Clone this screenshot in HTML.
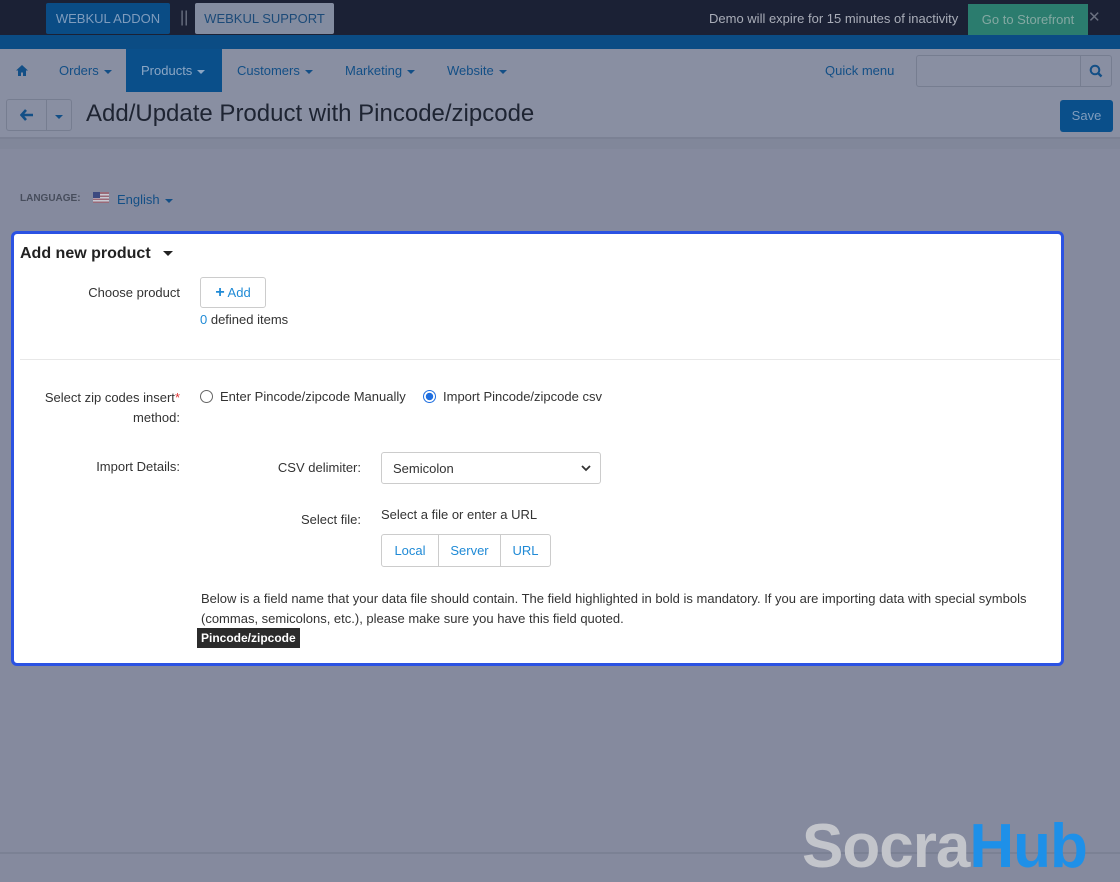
<!DOCTYPE html>
<html><head><style>
*{box-sizing:border-box;margin:0;padding:0}
body{width:1120px;height:880px;overflow:hidden;background:#858a9e;font-family:"Liberation Sans",Arial,sans-serif;font-size:13px;color:#333;position:relative}
.top{position:absolute;left:0;top:0;width:1120px;height:35px;background:#1b2135}
.blue{position:absolute;left:0;top:35px;width:1120px;height:14px;background:#0b4c84}
.btn1{position:absolute;left:46px;top:3px;width:124px;height:31px;background:#0a4c85;color:#7f9cbd;font-size:13px;line-height:31px;text-align:center;border-radius:2px}
.btn2{position:absolute;left:195px;top:3px;width:139px;height:31px;background:#838ca0;color:#1c4a78;font-size:13px;line-height:31px;text-align:center;border-radius:2px}
.nav{position:absolute;left:0;top:49px;width:1120px;height:88px;background:#898fa2}
.navi{position:absolute;top:49px;height:43px;line-height:44px;color:#134f86;font-size:13px}
.caret{display:inline-block;border-left:4px solid transparent;border-right:4px solid transparent;border-top:4px solid currentColor;vertical-align:middle;margin-left:5px}
.sep{position:absolute;left:0;top:137px;width:1120px;height:12px;background:#81879a;border-top:2px solid #7b8194}
.panel{position:absolute;left:11px;top:231px;width:1053px;height:435px;background:#fff;border:3px solid #2b52e3;border-radius:6px}
.lbl{position:absolute;text-align:right;color:#333;font-size:13px}
.lnk{color:#1f8ad6}
</style></head><body>
<div class="top"></div>
<div class="blue"></div>
<div class="btn1">WEBKUL ADDON</div>
<div style="position:absolute;left:180px;top:9px;color:#6e7586;font-size:16px">||</div>
<div class="btn2">WEBKUL SUPPORT</div>
<div style="position:absolute;left:709px;top:11px;color:#a9adb8;font-size:13px">Demo will expire for 15 minutes of inactivity</div>
<div style="position:absolute;left:968px;top:4px;width:120px;height:31px;background:#2b7c6e;color:#84a8a2;font-size:13px;line-height:31px;text-align:center">Go to Storefront</div>
<div style="position:absolute;left:1088px;top:8px;color:#6a7080;font-size:15px">✕</div>
<div class="nav"></div>
<div style="position:absolute;left:126px;top:49px;width:96px;height:43px;background:#0a4f8a"></div>
<svg style="position:absolute;left:15px;top:64px" width="14" height="13" viewBox="0 0 14 13"><path d="M7 1L1 6.5h2V12h3V8.5h2V12h3V6.5h2z" fill="#134f86"/></svg>
<div class="navi" style="left:59px">Orders<span class="caret"></span></div>
<div class="navi" style="left:141px;color:#8ba6c4">Products<span class="caret"></span></div>
<div class="navi" style="left:237px">Customers<span class="caret"></span></div>
<div class="navi" style="left:345px">Marketing<span class="caret"></span></div>
<div class="navi" style="left:447px">Website<span class="caret"></span></div>
<div class="navi" style="left:825px">Quick menu</div>
<div style="position:absolute;left:916px;top:55px;width:196px;height:32px;border:1px solid #767d90;border-radius:3px"></div>
<div style="position:absolute;left:1080px;top:55px;width:1px;height:32px;background:#767d90"></div>
<svg style="position:absolute;left:1089px;top:64px" width="14" height="14" viewBox="0 0 14 14"><circle cx="6" cy="6" r="4.3" stroke="#134f86" stroke-width="2" fill="none"/><path d="M9 9l3.5 3.5" stroke="#134f86" stroke-width="2.4"/></svg>
<div style="position:absolute;left:6px;top:99px;width:66px;height:32px;border:1px solid #767d90;border-radius:3px"></div>
<div style="position:absolute;left:46px;top:99px;width:1px;height:32px;background:#767d90"></div>
<svg style="position:absolute;left:20px;top:109px" width="14" height="12" viewBox="0 0 14 12"><path d="M6 1L1.5 6 6 11M2 6h11" stroke="#134f86" stroke-width="2.6" fill="none"/></svg>
<div style="position:absolute;left:55px;top:108px;color:#134f86"><span class="caret" style="margin:0"></span></div>
<div style="position:absolute;left:86px;top:100px;font-size:24px;color:#1e2432">Add/Update Product with Pincode/zipcode</div>
<div style="position:absolute;left:1060px;top:100px;width:53px;height:32px;background:#0a4f8a;color:#7f9cbd;border-radius:3px;line-height:32px;text-align:center">Save</div>
<div class="sep"></div>
<div style="position:absolute;left:20px;top:193px;font-size:10px;font-weight:bold;color:#474d5c">LANGUAGE:</div>
<svg style="position:absolute;left:93px;top:192px" width="16" height="11"><rect width="16" height="11" fill="#9a6a78"/><rect y="2" width="16" height="1.5" fill="#c8cad3"/><rect y="5" width="16" height="1.5" fill="#c8cad3"/><rect y="8" width="16" height="1.5" fill="#c8cad3"/><rect width="7" height="6" fill="#3d4a80"/></svg>
<div style="position:absolute;left:117px;top:192px;color:#134f86;font-size:13px">English<span class="caret"></span></div>
<div class="panel"></div>
<div style="position:absolute;left:20px;top:245px;font-size:16px;font-weight:bold;color:#222">Add new product <span class="caret" style="margin-left:8px;border-width:5px 5px 0"></span></div>
<div class="lbl" style="left:20px;width:160px;top:285px">Choose product</div>
<div style="position:absolute;left:200px;top:277px;width:66px;height:31px;border:1px solid #ccc;border-radius:3px;color:#1f8ad6;line-height:30px;text-align:center"><b style="font-size:16px">+</b> Add</div>
<div style="position:absolute;left:200px;top:312px"><span class="lnk">0</span> defined items</div>
<div style="position:absolute;left:20px;top:359px;width:1040px;height:1px;background:#e8e8e8"></div>
<div class="lbl" style="left:20px;width:160px;top:388px;line-height:20px">Select zip codes insert<span style="color:#d33">*</span><br>method:</div>
<div style="position:absolute;left:200px;top:390px;width:13px;height:13px;border:1px solid #666;border-radius:50%"></div>
<div style="position:absolute;left:220px;top:389px">Enter Pincode/zipcode Manually</div>
<div style="position:absolute;left:423px;top:390px;width:13px;height:13px;border:1.5px solid #1f6fe0;border-radius:50%;background:radial-gradient(#1f6fe0 45%,#fff 50%)"></div>
<div style="position:absolute;left:443px;top:389px">Import Pincode/zipcode csv</div>
<div class="lbl" style="left:20px;width:160px;top:459px">Import Details:</div>
<div class="lbl" style="left:200px;width:161px;top:460px">CSV delimiter:</div>
<div style="position:absolute;left:381px;top:452px;width:220px;height:32px;border:1px solid #ccc;border-radius:3px;padding-left:11px;line-height:31px">Semicolon<svg style="position:absolute;right:9px;top:12px" width="10" height="7"><path d="M1 1l4 4 4-4" stroke="#333" stroke-width="1.8" fill="none"/></svg></div>
<div class="lbl" style="left:200px;width:161px;top:512px">Select file:</div>
<div style="position:absolute;left:381px;top:507px">Select a file or enter a URL</div>
<div style="position:absolute;left:381px;top:534px;width:170px;height:33px;border:1px solid #ccc;border-radius:3px;display:flex;color:#1f8ad6;line-height:31px">
<div style="width:57px;text-align:center;border-right:1px solid #ccc">Local</div><div style="width:62px;text-align:center;border-right:1px solid #ccc">Server</div><div style="flex:1;text-align:center">URL</div></div>
<div style="position:absolute;left:201px;top:589px;line-height:20px;width:860px">Below is a field name that your data file should contain. The field highlighted in bold is mandatory. If you are importing data with special symbols (commas, semicolons, etc.), please make sure you have this field quoted.</div>
<div style="position:absolute;left:197px;top:628px;height:20px;padding:0 4px;background:#2b2b2b;color:#fff;font-weight:bold;font-size:12px;line-height:20px">Pincode/zipcode</div>
<div style="position:absolute;left:0;top:852px;width:1120px;height:2px;background:#7b8194"></div>
<div style="position:absolute;left:802px;top:812px;font-size:62px;font-weight:bold;letter-spacing:-1px;font-family:'Liberation Sans',sans-serif;line-height:70px;white-space:nowrap"><span style="color:#c3c5cb">Socra</span><span style="color:#1e90e8">Hub</span></div>
</body></html>
